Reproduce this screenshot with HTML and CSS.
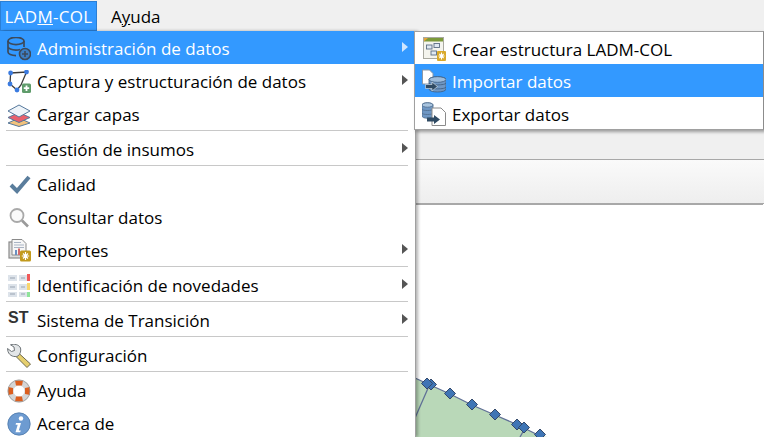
FILE: index.html
```html
<!DOCTYPE html>
<html lang="es">
<head>
    <meta charset="UTF-8">
    <title>LADM-COL</title>
    <link rel="stylesheet" href="styles.css">
</head>
<body>
    <div class="menubar">
        <div class="menubar-item active">LAD<u>M</u>-COL</div>
        <div class="menubar-item">A<u>y</u>uda</div>
    </div>

    <div class="workspace">
        <div class="toolbar-plain"></div>
        <div class="toolbar-grad"></div>
        <div class="map">
            <svg class="map-svg" width="764" height="232" viewBox="0 205 764 232">
                <polygon points="415,378 428,384 450,394 472,405 495,415 518,425 524,428 540,436 548,437 415,437" fill="#b9d8b8"/>
                <polyline points="415,378 428,384 450,394 472,405 495,415 518,425 524,428 540,436 548,442" fill="none" stroke="#5f6f96" stroke-width="1.3"/>
                <polyline points="429,386 415,418" fill="none" stroke="#5f6f96" stroke-width="1.3"/>
                <polyline points="524,430 520,437" fill="none" stroke="#5f6f96" stroke-width="1.3"/>
                <g fill="#3f75b5" stroke="#34496a" stroke-width="1">
                    <path d="M431 379l5.5 5.5-5.5 5.5-5.5-5.5z"/>
                    <path d="M427 378l5.5 5.5-5.5 5.5-5.5-5.5z"/>
                    <path d="M450 388l5.5 5.5-5.5 5.5-5.5-5.5z"/>
                    <path d="M472 399l5.5 5.5-5.5 5.5-5.5-5.5z"/>
                    <path d="M495 409l5.5 5.5-5.5 5.5-5.5-5.5z"/>
                    <path d="M517 419l5.5 5.5-5.5 5.5-5.5-5.5z"/>
                    <path d="M524 422l5.5 5.5-5.5 5.5-5.5-5.5z"/>
                    <path d="M540 429l5.5 5.5-5.5 5.5-5.5-5.5z"/>
                </g>
            </svg>
        </div>
    </div>

    <div class="menu main-menu">
        <div class="item selected">
            <svg class="icon" viewBox="0 0 24 24"><g fill="none" stroke="#3c4a5c" stroke-width="1.7"><ellipse cx="9" cy="4" rx="8" ry="3.6"/><path d="M1 4v11c0 2 3.500 3.600 8 3.600M17 4v6M1 9.500c0 2 3.500 3.600 8 3.600 1.500 0 3-.2 4-.6"/></g><circle cx="18" cy="17" r="5.500" fill="#3d7fc4" stroke="#3c4a5c" stroke-width="1.600"/><path d="M15 17h6M18 14v6" stroke="#3c4a5c" stroke-width="1.600"/></svg>
            <span class="label">Administración de datos</span><span class="arrow"></span>
        </div>
        <div class="item">
            <svg class="icon" viewBox="0 0 24 24"><path d="M3.600 3L19.500 2 14 15l-4 5-7-6z" fill="none" stroke="#3a3a3a" stroke-width="1.300"/><g fill="#3b7be0"><circle cx="3.600" cy="3" r="2.400"/><circle cx="19.500" cy="2" r="2.400"/><circle cx="10" cy="20" r="2.400"/><circle cx="3" cy="14" r="2.400"/></g><rect x="15" y="13.500" width="9" height="9.500" rx="1.500" fill="#5f9c6b"/><path d="M19.500 15.500v5.500M16.800 18.200h5.400" stroke="#fff" stroke-width="1.800"/></svg>
            <span class="label">Captura y estructuración de datos</span><span class="arrow"></span>
        </div>
        <div class="item">
            <svg class="icon" viewBox="0 0 24 24"><path d="M12 15l11 5-11 3.500L1 20z" fill="#f2c27c" stroke="#56789c"/><path d="M12 9.500l11 5-11 5-11-5z" fill="#e8606c" stroke="#56789c"/><path d="M12 2l11 6-11 6-11-6z" fill="#eef4f9" stroke="#56789c"/></svg>
            <span class="label">Cargar capas</span>
        </div>
        <div class="sep"></div>
        <div class="item">
            <span class="icon"></span>
            <span class="label">Gestión de insumos</span><span class="arrow"></span>
        </div>
        <div class="sep"></div>
        <div class="item">
            <svg class="icon" viewBox="0 0 24 24"><path d="M4 12l6 6L22 4" fill="none" stroke="#5a7d9c" stroke-width="4"/></svg>
            <span class="label">Calidad</span>
        </div>
        <div class="item">
            <svg class="icon" viewBox="0 0 24 24"><circle cx="10" cy="9.500" r="6.500" fill="#fafafa" stroke="#a9a9a9" stroke-width="1.800"/><path d="M15 14.500l6 6" stroke="#9a9a9a" stroke-width="2.600"/></svg>
            <span class="label">Consultar datos</span>
        </div>
        <div class="item">
            <svg class="icon" viewBox="0 0 24 24"><rect x="2" y="3" width="13" height="16" fill="#dcdcdc" stroke="#8a8a8a" stroke-width="1.200"/><path d="M5 .5h10l4 4V16H5z" fill="#f6f6f6" stroke="#8a8a8a"/><path d="M7 3.500h7M7 6h10M7 8.500h10" stroke="#a9b4c4"/><path d="M8 11h2v5H8z" fill="#6a8fc0"/><path d="M11 9.500h2V16h-2z" fill="#d56a6a"/><rect x="13" y="11.500" width="11" height="11" rx="1.500" fill="#c29a1c"/><path d="M18.500 13v8M14.800 17h7.400M16 14.500l5 5M21 14.500l-5 5" stroke="#fff" stroke-width="1.200"/></svg>
            <span class="label">Reportes</span><span class="arrow"></span>
        </div>
        <div class="sep"></div>
        <div class="item">
            <svg class="icon" viewBox="0 0 24 24"><g fill="#dde3ea"><rect x="1" y="1" width="9" height="6"/><rect x="12" y="1" width="8" height="6"/><rect x="1" y="10" width="9" height="6"/><rect x="12" y="10" width="8" height="6"/><rect x="1" y="18" width="9" height="5"/><rect x="12" y="18" width="8" height="5"/></g><path d="M3 4h5M14 4h4M3 13h5M14 13h4M3 20h5M14 20h4" stroke="#98a3b1"/><rect x="20" y="0" width="3" height="7" fill="#f05a5a"/><rect x="20" y="9" width="3" height="7" fill="#f8d56e"/><rect x="20" y="18" width="3" height="5" fill="#8fe39a"/></svg>
            <span class="label">Identificación de novedades</span><span class="arrow"></span>
        </div>
        <div class="sep"></div>
        <div class="item">
            <span class="icon st">ST</span>
            <span class="label">Sistema de Transición</span><span class="arrow"></span>
        </div>
        <div class="sep"></div>
        <div class="item">
            <svg class="icon" viewBox="0 0 24 24"><path d="M11 8.500l12.500 11.500-3.500 3.500L8 11.500z" fill="#e6cf6e" stroke="#6f6a4c"/><path d="M11 12C7.500 13.500 2.500 12 1 7.500L.5 4.500 4.500 7.500l3-1L7 3 3.500.8C7-.5 12 .5 13.500 4c.7 2.500 0 6-2.500 8z" fill="#e3e6e8" stroke="#6e7478"/></svg>
            <span class="label">Configuración</span>
        </div>
        <div class="sep"></div>
        <div class="item">
            <svg class="icon" viewBox="0 0 24 24"><circle cx="12" cy="12" r="8.500" fill="none" stroke="#d5d5d5" stroke-width="6"/><g fill="#dc5e1e"><path d="M8 1.500h8l-1 5H9zM8 22.500h8l-1-5H9zM1 8v8l5-1V9zM23 8v8l-5-1V9z"/></g><circle cx="12" cy="12" r="11" fill="none" stroke="#9c9c9c" stroke-width=".8"/></svg>
            <span class="label">Ayuda</span>
        </div>
        <div class="item">
            <svg class="icon" viewBox="0 0 24 24"><circle cx="12" cy="12" r="11.200" fill="#6d9bd1" stroke="#4d78aa" stroke-width=".8"/><circle cx="14" cy="6.500" r="2.200" fill="#fff"/><path d="M9 11h5l-2.200 7.500h2l-.6 1.800H8.500l2.200-7.600H8.600z" fill="#fff"/></svg>
            <span class="label">Acerca de</span>
        </div>
    </div>

    <div class="menu sub-menu">
        <div class="item">
            <svg class="icon" viewBox="0 0 24 24"><rect x="1.500" y=".5" width="20" height="21" fill="#f4f4ee" stroke="#a9a9a0"/><rect x="2" y="1" width="19" height="3.500" fill="#7c9a3a"/><path d="M2 1h4L2 4.500z" fill="#e8a43a"/><g fill="#dfe8f2" stroke="#5c6e84" stroke-width=".9"><rect x="4.500" y="8" width="5.500" height="4"/><rect x="12" y="6.500" width="5.500" height="4"/><rect x="9" y="14" width="5.500" height="4"/></g><rect x="15" y="14" width="9" height="10" rx="1" fill="#d9a92a"/><path d="M19.500 15.500v7M16.500 19h6M17.300 16.800l4.400 4.400M21.700 16.800l-4.400 4.400" stroke="#fff" stroke-width="1.100"/></svg>
            <span class="label">Crear estructura LADM-COL</span>
        </div>
        <div class="item selected">
            <svg class="icon" viewBox="0 0 24 24"><path d="M.5 1h7l3.500 3.500V15H.5z" fill="#fff" stroke="#8b97a6"/><path d="M7 10.500c0-3.500 17-3.500 17 0V20c0 4-17 4-17 0z" fill="#6f97c4" stroke="#3f5d7f" stroke-width=".8"/><ellipse cx="15.500" cy="10.500" rx="8.500" ry="2.800" fill="#9dbcdc" stroke="#3f5d7f" stroke-width=".8"/><path d="M7 14c0 2.500 17 2.500 17 0M7 18c0 2.500 17 2.500 17 0" fill="none" stroke="#3f5d7f" stroke-width=".8"/><path d="M3.500 15.500H10V13l5.500 4.500L10 22v-2.500H3.500z" fill="#2f4a63" stroke="#dfe8f0" stroke-width=".6"/></svg>
            <span class="label">Importar datos</span>
        </div>
        <div class="item">
            <svg class="icon" viewBox="0 0 24 24"><path d="M0 3c0-3 11-3 11 0v11c0 3-11 3-11 0z" fill="#6f97c4" stroke="#4f6c8d" stroke-width=".8"/><ellipse cx="5.500" cy="3" rx="5.500" ry="2.200" fill="#a9c4de" stroke="#4f6c8d" stroke-width=".8"/><path d="M0 7c0 2 11 2 11 0M0 11c0 2 11 2 11 0" fill="none" stroke="#4f6c8d" stroke-width=".8"/><path d="M10 6h9l4.500 4.500V23.500H10z" fill="#fff" stroke="#8b8b8b"/><path d="M5 15.500h7V13l6 4.500-6 4.500v-2.500H5z" fill="#2f4a63"/></svg>
            <span class="label">Exportar datos</span>
        </div>
    </div>
</body>
</html>
```

FILE: styles.css
```css
body { margin: 0; width: 764px; height: 437px; overflow: hidden; position: relative; background: #fff; font-family: "Open Sans", "Noto Sans", Arial, sans-serif; font-size: 17px; color: #000; display: flex; flex-direction: column; }

.menubar { display: flex; height: 30px; padding-top: 1px; background: #f0f0f0; flex-shrink: 0; }
.menubar-item { height: 30px; padding: 0 13px 0 14px; line-height: 32px; box-sizing: border-box; }
.menubar-item.active { width: 97px; padding: 0; text-align: center; background: #3399ff; border: 1px solid #2a7fd6; line-height: 30px; color: #fff; letter-spacing: 0.3px; }

.workspace { flex: 1; display: flex; flex-direction: column; }
.toolbar-plain { height: 128px; background: #f0f0f0; border-bottom: 1px solid #a8a8a8; }
.toolbar-grad { height: 43px; background: linear-gradient(#fafafa, #eeeeee); border-bottom: 1px solid #a8a8a8; box-shadow: 0 2px 0 -1px #a8a8a8; }
.map { flex: 1; background: #fff; overflow: hidden; margin-top: 1px; }
.map-svg { display: block; }

.menu { position: absolute; background: #fff; box-sizing: border-box; }
.main-menu { left: 0; top: 31px; width: 415px; height: 406px; box-shadow: 1px 0 0 #a0a0a0, 3px 0 3px rgba(0, 0, 0, 0.3); }
.sub-menu { left: 414px; top: 31px; width: 350px; height: 99px; border: 1px solid #a0a0a0; border-right-color: #8c8c8c; box-shadow: 2px 2px 3px rgba(0, 0, 0, 0.35); }

.item { display: flex; align-items: center; height: 33px; box-sizing: border-box; padding: 2px 0 0 7px; position: relative; }
.sub-menu .item { height: 32.33px; }
.sub-menu .item:last-child { padding-top: 3px; }
.item.selected { background: #3399ff; color: #fff; }
.icon { width: 24px; height: 24px; flex-shrink: 0; margin-right: 6px; }
.label { white-space: nowrap; }
.arrow { position: absolute; right: 7px; top: 11px; width: 0; height: 0; border-left: 6px solid #555; border-top: 5.5px solid transparent; border-bottom: 5.5px solid transparent; }
.item.selected .arrow { border-left-color: #cfe6ff; }
.sep { height: 1px; margin: 0 7px 1px 6px; background: #c8c8c8; }
.st { font-family: "Liberation Sans", Arial, sans-serif; font-weight: bold; font-size: 16px; line-height: 18px; color: #333; padding-left: 1px; width: 23px; }
```
